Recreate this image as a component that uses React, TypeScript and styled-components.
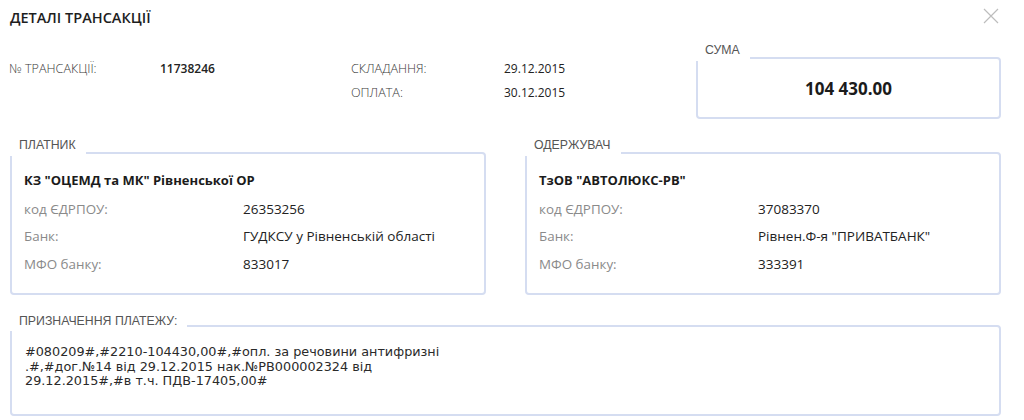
import React from 'react';
import styled, { createGlobalStyle } from 'styled-components';

const GlobalStyle = createGlobalStyle`
  html, body {
    margin: 0;
    padding: 0;
    background: #fff;
  }
  body {
    font-family: 'Open Sans', 'Noto Sans', sans-serif;
    color: #222;
  }
`;

const BORDER = '#d5ddf1';

interface Party {
  title: string;
  name: string;
  code: string;
  bank: string;
  mfo: string;
}

const parties: Party[] = [
  {
    title: 'ПЛАТНИК',
    name: 'КЗ "ОЦЕМД та МК" Рівненської ОР',
    code: '26353256',
    bank: 'ГУДКСУ у Рівненській області',
    mfo: '833017',
  },
  {
    title: 'ОДЕРЖУВАЧ',
    name: 'ТзОВ "АВТОЛЮКС-РВ"',
    code: '37083370',
    bank: 'Рівнен.Ф-я "ПРИВАТБАНК"',
    mfo: '333391',
  },
];

const purpose =
  '#080209#,#2210-104430,00#,#опл. за речовини антифризні\n.#,#дог.№14 від 29.12.2015 нак.№РВ000002324 від\n29.12.2015#,#в т.ч. ПДВ-17405,00#';

const CloseIcon = () => (
  <svg width="16" height="16" viewBox="0 0 16 16">
    <path d="M1 1 L15 15 M15 1 L1 15" stroke="#bdbdbd" strokeWidth="1.2" fill="none" />
  </svg>
);

const TransactionDetails: React.FC = () => {
  return (
    <Page>
      <Header>
        <Title>ДЕТАЛІ ТРАНСАКЦІЇ</Title>
        <CloseBtn>
          <CloseIcon />
        </CloseBtn>
      </Header>

      <TopSection>
        <InfoGrid>
          <InfoLabel>№ ТРАНСАКЦІЇ:</InfoLabel>
          <InfoValue $strong>11738246</InfoValue>
          <InfoLabel>СКЛАДАННЯ:</InfoLabel>
          <InfoValue>29.12.2015</InfoValue>
          <span />
          <span />
          <InfoLabel>ОПЛАТА:</InfoLabel>
          <InfoValue>30.12.2015</InfoValue>
        </InfoGrid>
        <SumBox>
          <Legend>СУМА</Legend>
          <Amount>104 430.00</Amount>
        </SumBox>
      </TopSection>

      <Parties>
        {parties.map((p) => (
          <PartyBox key={p.title}>
            <Legend>{p.title}</Legend>
            <PartyName>{p.name}</PartyName>
            <PartyRows>
              <RowLabel>код ЄДРПОУ:</RowLabel>
              <RowValue>{p.code}</RowValue>
              <RowLabel>Банк:</RowLabel>
              <RowValue>{p.bank}</RowValue>
              <RowLabel>МФО банку:</RowLabel>
              <RowValue>{p.mfo}</RowValue>
            </PartyRows>
          </PartyBox>
        ))}
      </Parties>

      <PurposeBox>
        <Legend $low>ПРИЗНАЧЕННЯ ПЛАТЕЖУ:</Legend>
        <PurposeText>{purpose}</PurposeText>
      </PurposeBox>
    </Page>
  );
};

//styles
const Page = styled.div`
  width: 991px;
  padding: 0 23px 0 10px;
`;

const Header = styled.header`
  height: 34px;
  display: flex;
  align-items: center;
  justify-content: space-between;
`;

const Title = styled.h1`
  margin: 0;
  font-size: 14.5px;
  font-weight: 600;
  color: #1e1e1e;
`;

const CloseBtn = styled.button`
  border: 0;
  background: none;
  padding: 0;
  margin-right: 2px;
  margin-bottom: 2px;
  display: flex;
  cursor: pointer;
`;

const TopSection = styled.section`
  margin-top: 23px;
  display: flex;
  justify-content: space-between;
  align-items: flex-start;
`;

const InfoGrid = styled.div`
  display: grid;
  grid-template-columns: 150px 192px 152px auto;
  grid-auto-rows: 22px;
  row-gap: 2px;
  align-items: center;
`;

const InfoLabel = styled.span`
  font-size: 12.6px;
  font-weight: 300;
  color: #3a3a3a;
  margin-left: -1px;
`;

const InfoValue = styled.span<{ $strong?: boolean }>`
  font-size: 12px;
  font-weight: ${(p) => (p.$strong ? 600 : 400)};
  color: #222;
`;

const Fieldset = styled.div`
  position: relative;
  box-sizing: border-box;
  border: 2px solid ${BORDER};
  border-radius: 4px;
`;

const Legend = styled.span<{ $low?: boolean }>`
  position: absolute;
  top: ${(p) => (p.$low ? '-13px' : '-16px')};
  left: -2px;
  padding: 0 10px ${(p) => (p.$low ? '2px' : '3px')} 9px;
  background: #fff;
  font-family: 'Liberation Sans', Arial, sans-serif;
  font-size: 12.3px;
  line-height: 15px;
  color: #555;
`;

const SumBox = styled(Fieldset)`
  width: 305px;
  height: 62px;
  display: flex;
  align-items: center;
  justify-content: center;
`;

const Amount = styled.span`
  font-size: 17px;
  font-weight: 700;
  color: #1b1b1b;
`;

const Parties = styled.section`
  margin-top: 33px;
  display: grid;
  grid-template-columns: 476px 476px;
  column-gap: 39px;
`;

const PartyBox = styled(Fieldset)`
  height: 143px;
  padding: 16px 12px 0 12px;
`;

const PartyName = styled.div`
  font-size: 13px;
  font-weight: 700;
  line-height: 20px;
  color: #1b1b1b;
`;

const PartyRows = styled.div`
  margin-top: 5px;
  display: grid;
  grid-template-columns: 219px 1fr;
  grid-auto-rows: 27.5px;
  align-items: center;
`;

const RowLabel = styled.span`
  font-size: 13.4px;
  color: #8a8a8a;
`;

const RowValue = styled.span`
  font-size: 13.5px;
  font-weight: 500;
  color: #222;
`;

const PurposeBox = styled(Fieldset)`
  margin-top: 30px;
  height: 91px;
  padding: 18px 13px 0 13px;
`;

const PurposeText = styled.div`
  font-family: 'DejaVu Sans', Verdana, sans-serif;
  font-size: 12.8px;
  line-height: 14.5px;
  color: #2a2a2a;
  white-space: pre-line;
`;

export default function App() {
  return (
    <>
      <GlobalStyle />
      <TransactionDetails />
    </>
  );
}
